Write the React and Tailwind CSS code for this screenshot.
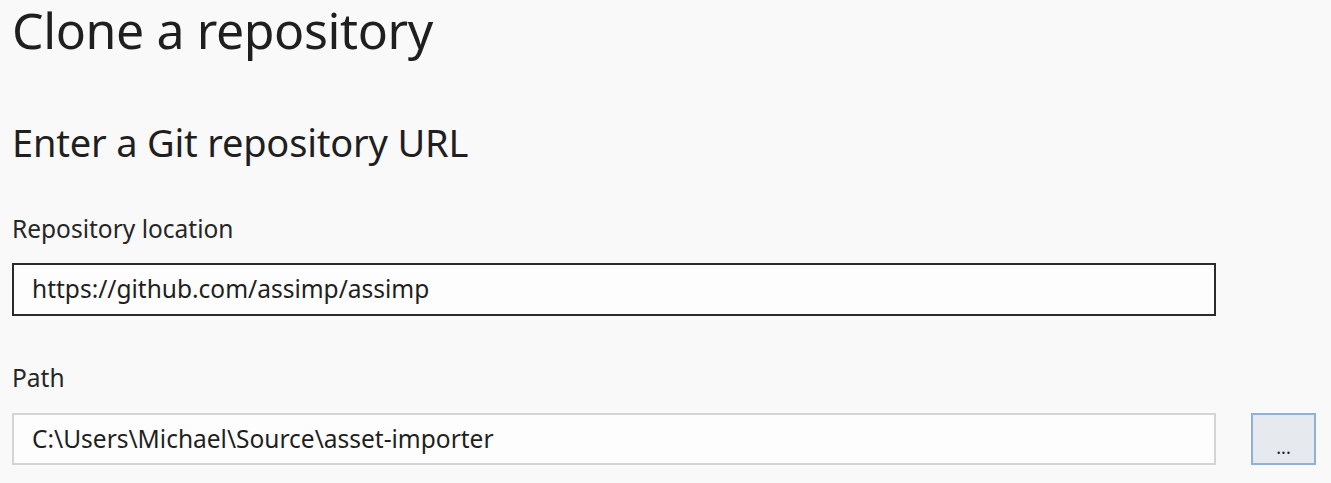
export default function App() {
  return (
    <div className="min-h-[483px] w-full bg-[#f9f9f9] px-3 text-[#1f1f1f]" style={{ fontFamily: '"Noto Sans", "Open Sans", sans-serif' }}>
      <h1 className="text-[50px] leading-[60px] font-normal tracking-[-0.4px]">Clone a repository</h1>

      <h2 className="mt-[60px] text-[38px] leading-[44px] font-normal tracking-[-0.2px]">Enter a Git repository URL</h2>

      <div className="mt-[50px]">
        <label className="block text-[24.5px] leading-[30px] text-[#262626]">Repository location</label>
        <div className="mt-[19px] flex items-center w-[1204px] h-[53px] border-2 border-[#2b2b2b] bg-[#fdfdfd] pl-[18px] text-[24.5px]">
          https://github.com/assimp/assimp
        </div>
      </div>

      <div className="mt-[47px]">
        <label className="block text-[24.5px] leading-[30px] text-[#262626]">Path</label>
        <div className="mt-[20px] flex items-start gap-[35px]">
          <div className="flex items-center w-[1204px] h-[52px] border-2 border-[#d4d4d4] bg-[#fdfdfd] pl-[18px] text-[24.5px]">
            C:\Users\Michael\Source\asset-importer
          </div>
          <button className="w-[65px] h-[52px] border-2 border-[#8fb0d8] bg-[#e6e9ee] text-[18px] leading-none pt-[16px] text-[#1f1f1f]">
            ...
          </button>
        </div>
      </div>
    </div>
  )
}
